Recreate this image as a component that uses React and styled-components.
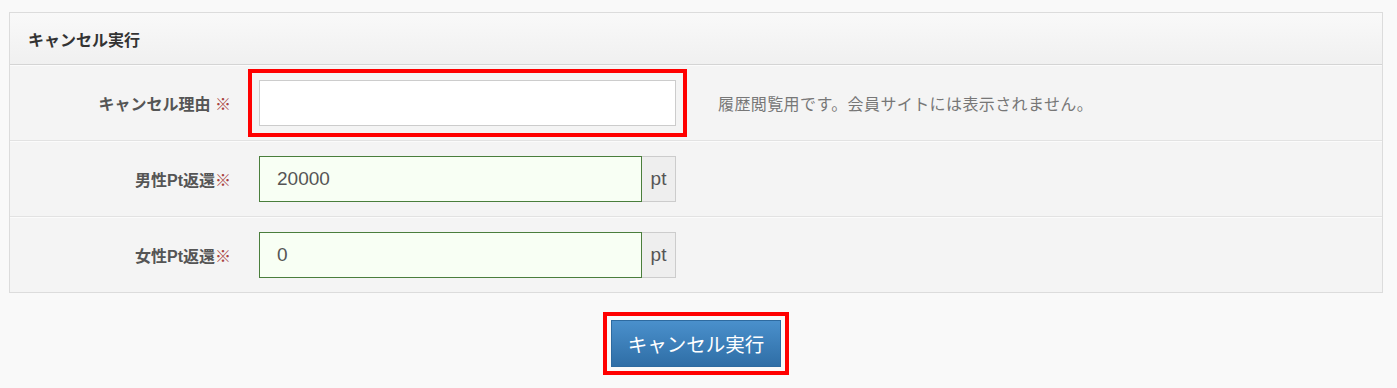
import React from "react";
import styled, { createGlobalStyle, css } from "styled-components";

const Global = createGlobalStyle`
  html, body { margin: 0; padding: 0; background: #f9f9f9; }
  body {
    font-family: "Liberation Sans", "Noto Sans CJK JP", sans-serif;
    font-size: 16px;
    color: #333;
  }
`;

const Page = styled.div`
  padding: 12px 14px 16px 9px;
`;

const Panel = styled.section`
  border: 1px solid #dcdcdc;
  background: #f4f4f4;
`;

const PanelHeader = styled.header`
  height: 51px;
  display: flex;
  align-items: center;
  padding-left: 18px;
  background: linear-gradient(#f9f9f9, #f0f0f0);
  border-bottom: 1px solid #d4d4d4;
  font-weight: bold;
  font-size: 16px;
  color: #333;
`;

const Row = styled.div`
  display: flex;
  align-items: center;
  padding: 15px 0 14px;
  box-shadow: inset 0 1px 0 #fbfbfb;
  border-bottom: 1px solid #e2e2e2;
  &:last-child { border-bottom: none; }
`;

const Label = styled.label`
  width: 221px;
  padding-right: 28px;
  text-align: right;
  font-weight: bold;
  font-size: 16px;
  color: #555;
  flex-shrink: 0;
`;

const Req = styled.span`
  color: #a94442;
  font-weight: normal;
`;

const highlight = css`
  outline: 4px solid #ff0000;
  outline-offset: 7px;
`;

const TextInput = styled.input`
  box-sizing: border-box;
  width: ${(p) => p.$w}px;
  height: 46px;
  padding: 0 17px;
  font-family: inherit;
  font-size: 19px;
  color: #555;
  background: ${(p) => (p.$valid ? "#f8fff4" : "#fff")};
  border: 1px solid ${(p) => (p.$valid ? "#4a7e3c" : "#cccccc")};
  border-radius: 0;
  ${(p) => p.$hl && highlight}
`;

const Group = styled.div`
  display: flex;
`;

const Addon = styled.span`
  box-sizing: border-box;
  width: 34px;
  height: 46px;
  display: flex;
  align-items: center;
  justify-content: center;
  background: #eeeeee;
  border: 1px solid #cccccc;
  border-left: none;
  font-size: 19px;
  color: #555;
`;

const Help = styled.span`
  margin-left: 42px;
  font-size: 16px;
  letter-spacing: 0.4px;
  color: #777;
`;

const Actions = styled.div`
  display: flex;
  justify-content: center;
  padding-top: 27px;
`;

const Button = styled.button`
  width: 170px;
  height: 47px;
  font-family: inherit;
  font-size: 19.5px;
  color: #fff;
  background: linear-gradient(#4a90cc, #2f6ea6);
  border: 1px solid #2d6aa0;
  border-radius: 0;
  outline: 4px solid #ff0000;
  outline-offset: 4px;
  cursor: pointer;
`;

export default function App() {
  return (
    <>
      <Global />
      <Page>
        <Panel>
          <PanelHeader>キャンセル実行</PanelHeader>
          <Row>
            <Label>
              キャンセル理由 <Req>※</Req>
            </Label>
            <TextInput $w={417} $hl defaultValue="" />
            <Help>履歴閲覧用です。会員サイトには表示されません。</Help>
          </Row>
          <Row>
            <Label>
              男性Pt返還<Req>※</Req>
            </Label>
            <Group>
              <TextInput $w={383} $valid defaultValue="20000" />
              <Addon>pt</Addon>
            </Group>
          </Row>
          <Row>
            <Label>
              女性Pt返還<Req>※</Req>
            </Label>
            <Group>
              <TextInput $w={383} $valid defaultValue="0" />
              <Addon>pt</Addon>
            </Group>
          </Row>
        </Panel>
        <Actions>
          <Button>キャンセル実行</Button>
        </Actions>
      </Page>
    </>
  );
}
